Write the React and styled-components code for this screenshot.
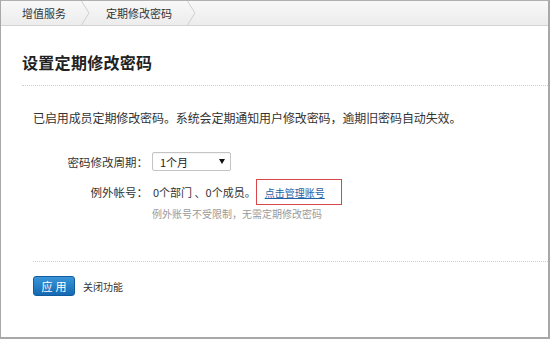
import React from "react";
import styled, { createGlobalStyle } from "styled-components";

const Global = createGlobalStyle`
  html, body { margin: 0; padding: 0; background: #ffffff; }
  body { font-family: "Noto Sans CJK SC", "Liberation Sans", sans-serif; color: #333; }
  * { box-sizing: border-box; }
`;

const Frame = styled.div`
  width: 550px;
  height: 339px;
  border-top: 1px solid #b0b0b0;
  border-left: 1px solid #a8a8a8;
  border-right: 2px solid #a8a8a8;
  border-bottom: 2px solid #a8a8a8;
  display: flex;
  flex-direction: column;
  background: #fff;
`;

const Crumbs = styled.div`
  height: 25px;
  border-bottom: 1px solid #d3d3d3;
  background: linear-gradient(#f8f8f8, #ececec);
  display: flex;
  align-items: stretch;
  padding-left: 21px;
`;

const Crumb = styled.div`
  display: flex;
  align-items: center;
  font-size: 11px;
  color: #333;
  gap: ${(p) => p.$gap}px;
  margin-right: 16px;
`;

const Chevron = () => (
  <svg width="9" height="24" viewBox="0 0 9 24">
    <polyline points="0.5,0 8,12 0.5,24" fill="none" stroke="#cfcfcf" strokeWidth="1" />
  </svg>
);

const TitleBar = styled.div`
  margin-left: 21px;
  padding: 26px 0 13px 0;
  border-bottom: 1px dotted #cfcfcf;
`;

const Title = styled.h1`
  margin: 0;
  font-size: 16px;
  line-height: 20px;
  font-weight: bold;
  color: #222;
  letter-spacing: 0.3px;
`;

const Body = styled.div`
  margin-left: 32px;
  padding-top: 23px;
  display: flex;
  flex-direction: column;
`;

const Desc = styled.p`
  margin: 0;
  font-size: 12px;
  line-height: 18px;
  color: #333;
  letter-spacing: -0.1px;
`;

const Row = styled.div`
  display: flex;
  align-items: center;
  margin-top: ${(p) => p.$top}px;
  height: ${(p) => p.$h}px;
`;

const Label = styled.div`
  width: 115px;
  text-align: right;
  font-size: 11.5px;
  color: #333;
  margin-right: 4px;
`;

const Select = styled.div`
  width: 79px;
  height: 19px;
  border: 1px solid #c4c4c4;
  border-radius: 2px;
  display: flex;
  align-items: center;
  justify-content: space-between;
  padding: 0 5px 0 7px;
  font-size: 11px;
  color: #222;
  background: #fff;
  box-shadow: inset 0 1px 1px rgba(0, 0, 0, 0.04);
`;

const Arrow = styled.span`
  width: 0;
  height: 0;
  border-left: 3px solid transparent;
  border-right: 3px solid transparent;
  border-top: 5px solid #111;
`;

const Value = styled.span`
  font-size: 11px;
  color: #333;
  margin-left: 1px;
  white-space: pre;
`;

const Mark = styled.span`
  display: inline-flex;
  align-items: center;
  height: 26px;
  border: 1px solid #d9464c;
  padding: 0 16px 0 8px;
  margin-left: 0;
`;

const Link = styled.a`
  font-size: 10px;
  color: #1f5fa6;
  text-decoration: underline;
  cursor: pointer;
`;

const Hint = styled.div`
  margin-top: 2px;
  margin-left: 119px;
  font-size: 10px;
  line-height: 14px;
  color: #9a9a9a;
`;

const Footer = styled.div`
  margin-left: 32px;
  margin-top: 40px;
  border-top: 1px dotted #cfcfcf;
  padding-top: 14px;
  display: flex;
  align-items: center;
  gap: 8px;
`;

const Button = styled.button`
  width: 42px;
  height: 20px;
  border: 1px solid #0f5d9e;
  border-radius: 3px;
  background: linear-gradient(#3a95d8, #1569b3);
  color: #fff;
  font-family: inherit;
  font-size: 11px;
  padding: 0;
  letter-spacing: 3px;
  text-indent: 3px;
  cursor: pointer;
`;

const Plain = styled.span`
  font-size: 10px;
  color: #333;
`;

export default function App() {
  return (
    <>
      <Global />
      <Frame>
        <Crumbs>
          <Crumb $gap={15}>
            增值服务
            <Chevron />
          </Crumb>
          <Crumb $gap={15}>
            定期修改密码
            <Chevron />
          </Crumb>
        </Crumbs>
        <TitleBar>
          <Title>设置定期修改密码</Title>
        </TitleBar>
        <Body>
          <Desc>已启用成员定期修改密码。系统会定期通知用户修改密码，逾期旧密码自动失效。</Desc>
          <Row $top={25} $h={19}>
            <Label>密码修改周期：</Label>
            <Select>
              1个月
              <Arrow />
            </Select>
          </Row>
          <Row $top={8} $h={26}>
            <Label>例外帐号：</Label>
            <Value>{"0个部门 、0个成员。"}</Value>
            <Mark>
              <Link>点击管理账号</Link>
            </Mark>
          </Row>
          <Hint>例外账号不受限制，无需定期修改密码</Hint>
        </Body>
        <Footer>
          <Button>应用</Button>
          <Plain>关闭功能</Plain>
        </Footer>
      </Frame>
    </>
  );
}
